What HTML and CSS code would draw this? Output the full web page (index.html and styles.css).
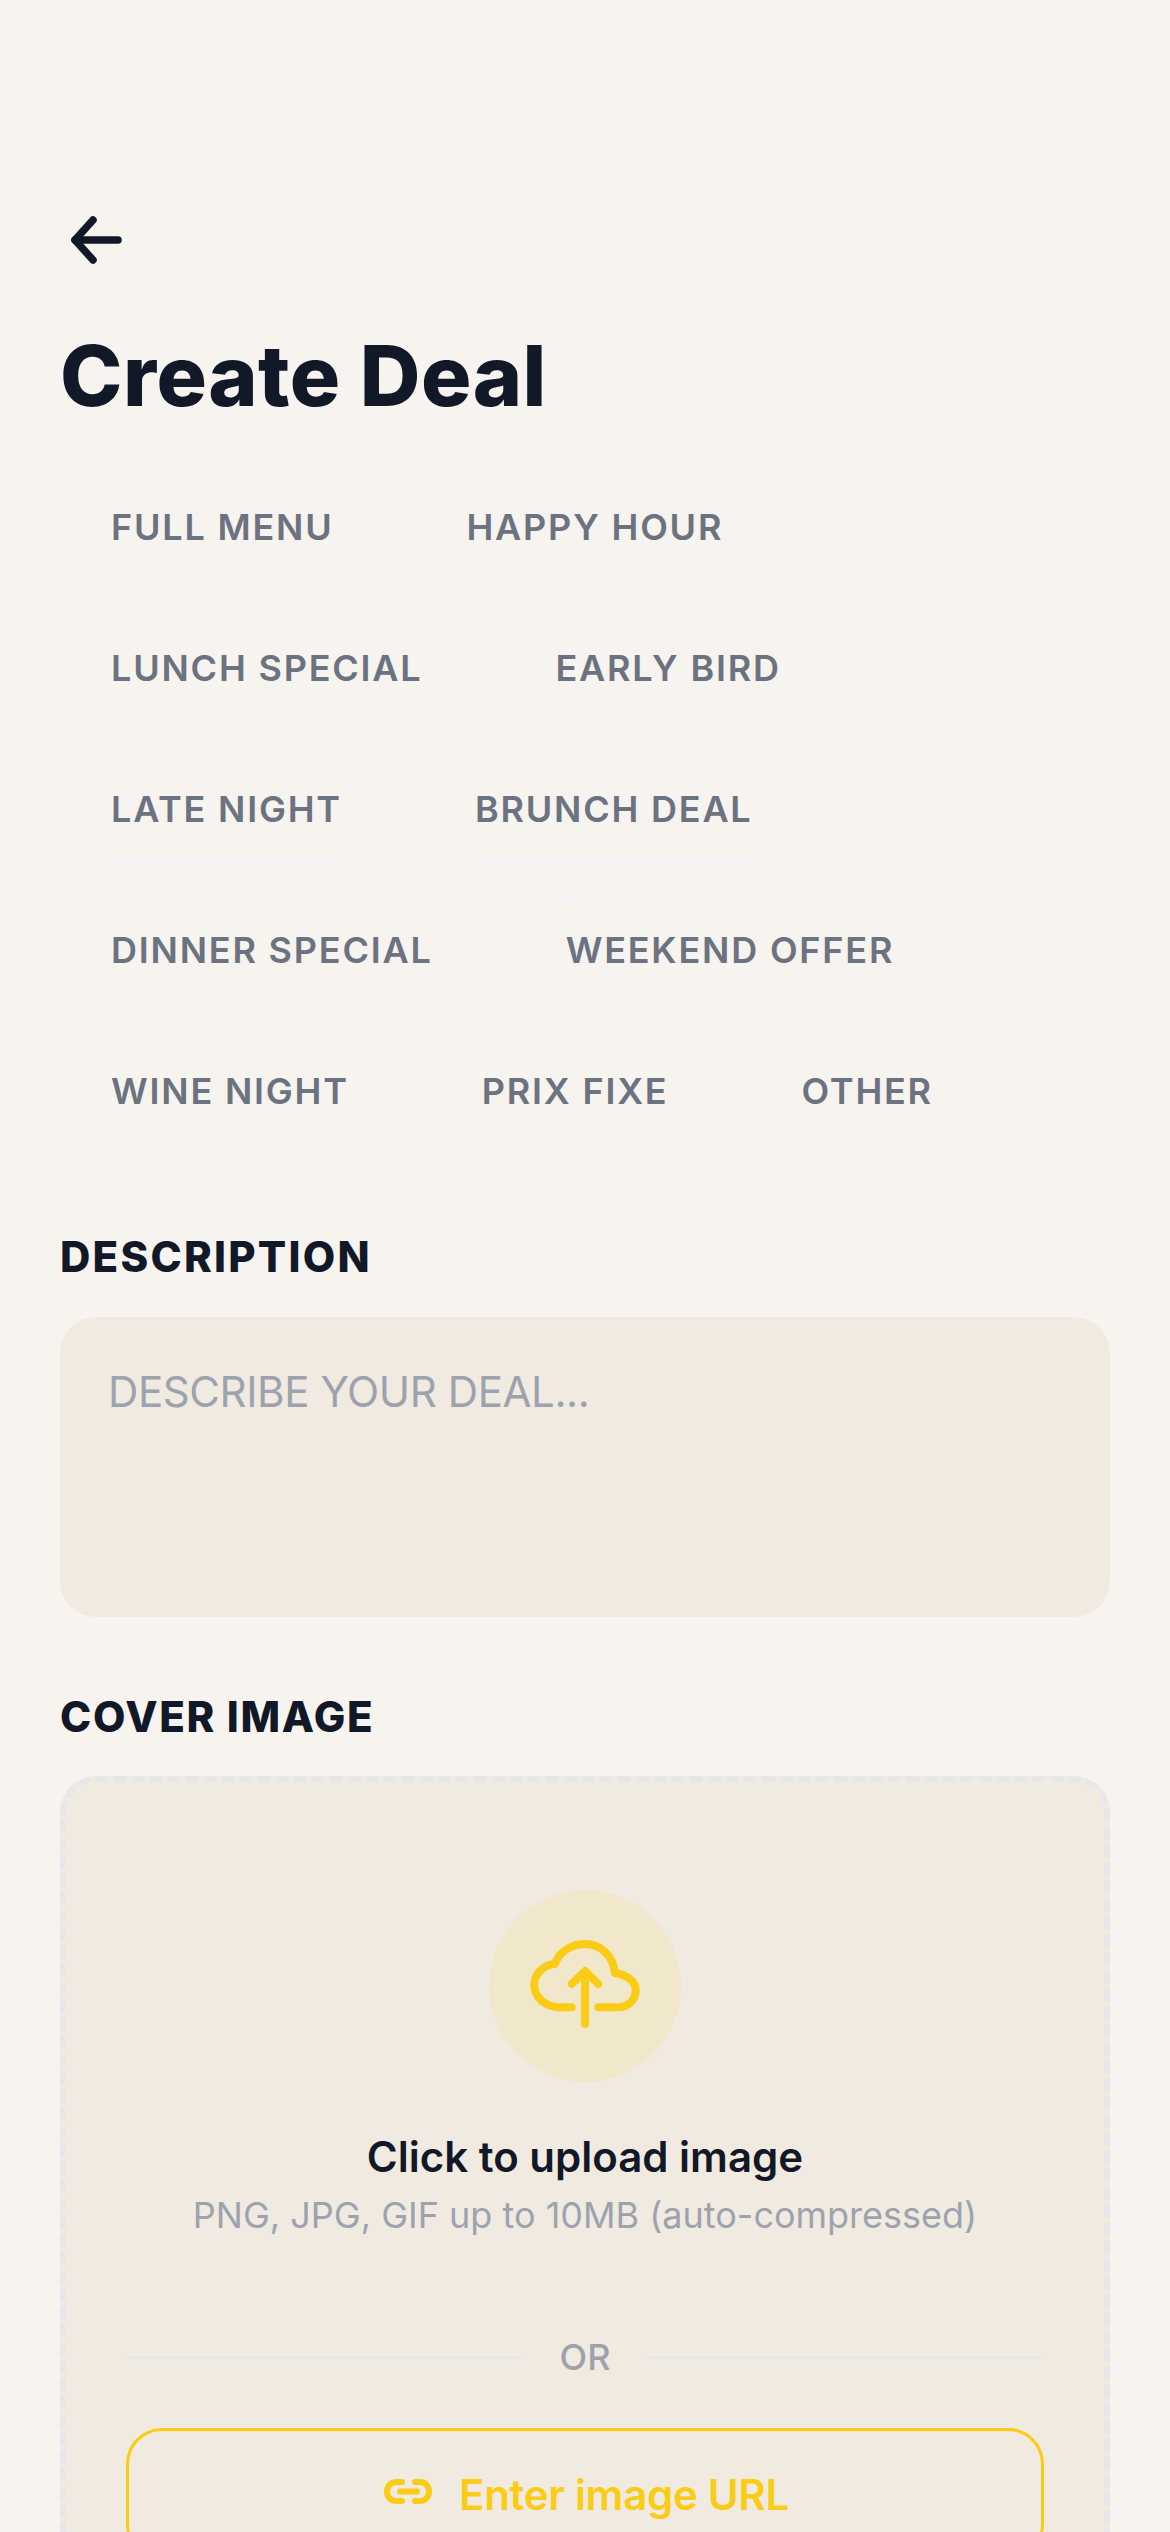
FILE: index.html
```html
<!DOCTYPE html>
<html lang="en">
<head>
    <meta charset="UTF-8">
    <meta name="viewport" content="width=device-width, initial-scale=1.0">
    <title>Create Deal</title>
    <link rel="stylesheet" href="styles.css">
</head>
<body>
    <div class="screen">
        <!-- Back arrow -->
        <div class="back-btn">
            <svg width="72" height="72" viewBox="0 0 72 72" fill="none" stroke="#111827" stroke-width="7.5" stroke-linecap="round" stroke-linejoin="round">
                <path d="M15 36H58"/>
                <path d="M33 16L15 36L33 56"/>
            </svg>
        </div>

        <h1 class="title">Create Deal</h1>

        <div class="chips">
            <span class="chip">Full Menu</span>
            <span class="chip">Happy Hour</span>
            <span class="chip">Lunch Special</span>
            <span class="chip">Early Bird</span>
            <span class="chip">Late Night</span>
            <span class="chip">Brunch Deal</span>
            <span class="chip">Dinner Special</span>
            <span class="chip">Weekend Offer</span>
            <span class="chip">Wine Night</span>
            <span class="chip">Prix Fixe</span>
            <span class="chip">Other</span>
        </div>

        <div class="label label-first">Description</div>
        <div class="textarea">Describe your deal...</div>

        <div class="label">Cover Image</div>
        <div class="dropzone">
            <div class="upload-circle">
                <svg width="120" height="120" viewBox="0 0 120 120" fill="none" stroke="#facc15" stroke-width="8" stroke-linecap="round" stroke-linejoin="round">
                    <path d="M46.7 81.3H36C20 81.3 9.3 71 9.3 59C9.3 48 18 39 30 38C34 26 46 18 60 18C76 18 88 30 90 47C102 49 110.7 55 110.7 64C110.7 74 103 81.3 93 81.3H73.3"/>
                    <path d="M60 98V46"/>
                    <path d="M46.7 58L60 45L73.3 58"/>
                </svg>
            </div>
            <div class="upload-title">Click to upload image</div>
            <div class="upload-hint">PNG, JPG, GIF up to 10MB (auto-compressed)</div>

            <div class="divider">
                <span class="divider-line"></span>
                <span class="divider-text">OR</span>
                <span class="divider-line"></span>
            </div>

            <div class="url-btn">
                <svg width="54" height="54" viewBox="0 0 54 54" fill="none" stroke="#facc15" stroke-width="6" stroke-linecap="round" stroke-linejoin="round">
                    <path d="M21 15H15.5C10 15 6 19 6 24.5C6 30 10 34 15.5 34H21"/>
                    <path d="M34 15H39.5C44 15 48 19 48 24.5C48 30 44 34 39.5 34H34"/>
                    <path d="M19 24.5H36"/>
                </svg>
                <span>Enter image URL</span>
            </div>
        </div>
    </div>
</body>
</html>
```

FILE: styles.css
```css
* {
    margin: 0;
    padding: 0;
    box-sizing: border-box;
}

html,
body {
    height: 2532px;
    overflow: hidden;
}

body {
    font-family: 'Inter', sans-serif;
    background: #f7f3ee;
    color: #111827;
}

.screen {
    height: 2532px;
    padding: 204px 60px 0;
    overflow: hidden;
}

.back-btn {
    width: 72px;
    height: 72px;
}

.back-btn svg {
    display: block;
}

.title {
    margin-top: 49px;
    font-size: 84px;
    line-height: 102px;
    font-weight: 800;
    letter-spacing: 0.5px;
}

/* Deal type chips */
.chips {
    display: flex;
    flex-wrap: wrap;
    gap: 33px 31px;
    margin-top: 46px;
}

.chip {
    display: flex;
    align-items: center;
    height: 108px;
    padding: 0 48px;
    border: 3px solid #f3f4f6;
    border-radius: 54px;
    font-size: 36px;
    font-weight: 600;
    letter-spacing: 1.8px;
    text-transform: uppercase;
    color: #6b7280;
}

.label {
    margin-top: 73px;
    font-size: 42px;
    line-height: 54px;
    font-weight: 800;
    letter-spacing: 1.65px;
    text-transform: uppercase;
}

.label-first {
    margin-top: 85px;
    letter-spacing: 2.25px;
}

.textarea {
    height: 300px;
    margin-top: 33px;
    padding: 48px;
    background: #f1eae0;
    border-radius: 36px;
    font-size: 42px;
    line-height: 54px;
    letter-spacing: -0.4px;
    text-transform: uppercase;
    color: #9ca3af;
}

/* Cover image upload */
.dropzone {
    display: flex;
    flex-direction: column;
    align-items: center;
    height: 900px;
    margin-top: 32px;
    padding: 108px 60px 0;
    background: #f1eae0;
    border: 6px dashed #e5e7eb;
    border-radius: 36px;
}

.upload-circle {
    display: flex;
    align-items: center;
    justify-content: center;
    width: 192px;
    height: 192px;
    background: rgba(250, 204, 21, 0.1);
    border-radius: 50%;
}

.upload-title {
    margin-top: 48px;
    font-size: 42px;
    line-height: 54px;
    font-weight: 600;
}

.upload-hint {
    margin-top: 7px;
    font-size: 36px;
    line-height: 48px;
    color: #9ca3af;
}

.divider {
    display: flex;
    align-items: center;
    gap: 36px;
    width: 100%;
    margin-top: 94px;
}

.divider-line {
    flex: 1;
    height: 3px;
    background: #e5e7eb;
}

.divider-text {
    font-size: 36px;
    line-height: 48px;
    font-weight: 500;
    color: #9ca3af;
}

.url-btn {
    display: flex;
    align-items: center;
    justify-content: center;
    gap: 24px;
    width: 100%;
    height: 132px;
    margin-top: 47px;
    border: 3px solid #facc15;
    border-radius: 36px;
    font-size: 42px;
    font-weight: 600;
    letter-spacing: -0.3px;
    color: #facc15;
}
```
